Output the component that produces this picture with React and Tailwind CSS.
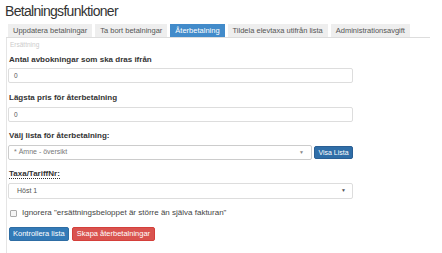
import React from 'react';

const tabs = [
  'Uppdatera betalningar',
  'Ta bort betalningar',
  'Återbetalning',
  'Tildela elevtaxa utifrån lista',
  'Administrationsavgift',
];

const App = () => {
  return (
    <div className="w-[442px] h-[253px] bg-white overflow-hidden text-[#333]" style={{ fontFamily: '"Liberation Sans", Arial, sans-serif' }}>
      {/* Title */}
      <h1 className="pl-[5px] pt-[2px] text-[14px] leading-[19px] tracking-[-0.7px] text-[#333]">Betalningsfunktioner</h1>

      {/* Tabs */}
      <div className="mt-[3px] ml-[6px] w-[424px] flex items-end gap-[3px] pl-[2px] border-b border-[#ddd] h-[14px]">
        {tabs.map((t) => (
          <div
            key={t}
            className={`h-[13px] px-[5px] text-[7.5px] leading-[13px] whitespace-nowrap ${
              t === 'Återbetalning' ? 'bg-[#428bca] text-white' : 'bg-[#eee] text-[#555]'
            }`}
          >
            {t}
          </div>
        ))}
      </div>

      {/* Panel */}
      <div className="ml-[6px] border-l border-[#e5e5e5] pl-[1px] pt-[3px] h-[220px]">
        <div className="pl-[2px] text-[6.5px] leading-[8px] text-[#ccc]">Ersättning</div>

        <div className="mt-[6px] pl-[1px] text-[8px] leading-[10px] font-bold">Antal avbokningar som ska dras ifrån</div>
        <div className="mt-[3px] w-[345px] h-[15px] border border-[#ddd] rounded-[2px] text-[6.5px] leading-[13px] pl-[5px] text-[#555]">0</div>

        <div className="mt-[10px] pl-[1px] text-[8px] leading-[10px] font-bold">Lägsta pris för återbetalning</div>
        <div className="mt-[4px] w-[345px] h-[15px] border border-[#ddd] rounded-[2px] text-[6.5px] leading-[13px] pl-[5px] text-[#555]">0</div>

        <div className="mt-[9px] pl-[1px] text-[8px] leading-[10px] font-bold">Välj lista för återbetalning:</div>
        <div className="mt-[4px] flex items-center w-[345px] gap-[2px]">
          <div className="flex-1 h-[15px] border border-[#ccc] rounded-[2px] flex items-center justify-between pl-[5px] pr-[7px] text-[7px] text-[#777]">
            <span>* Ämne - översikt</span>
            <span className="text-[5px] text-[#888]">▼</span>
          </div>
          <div className="h-[13px] w-[39px] bg-[#2f6ea8] border border-[#2a5f94] rounded-[2px] text-white text-[7px] leading-[11px] text-center">Visa Lista</div>
        </div>

        <div className="mt-[9px] pl-[1px] text-[8px] leading-[10px] font-bold">
          <span className="border-b border-dotted border-[#333]">Taxa/TariffNr:</span>
        </div>
        <div className="mt-[4px] w-[345px] h-[16px] border border-[#ddd] rounded-[2px] flex items-center justify-between pl-[8px] pr-[6px] text-[7px] text-[#555]">
          <span>Höst 1</span>
          <span className="text-[5px] text-[#555]">▼</span>
        </div>

        <div className="mt-[9px] flex items-center pl-[2px] gap-[5px] h-[10px]">
          <div className="w-[7px] h-[7px] border border-[#aaa] rounded-[1px] bg-[#f5f5f5]" />
          <span className="text-[8px] leading-[10px] text-[#444]">Ignorera "ersättningsbeloppet är större än själva fakturan"</span>
        </div>

        <div className="mt-[9px] flex gap-[3px] pl-[1px]">
          <div className="h-[14px] px-[3px] bg-[#337ab7] border border-[#2e6da4] rounded-[2px] text-white text-[7.5px] leading-[12px]">Kontrollera lista</div>
          <div className="h-[14px] px-[4px] bg-[#d9534f] border border-[#d43f3a] rounded-[2px] text-white text-[7.5px] leading-[12px]">Skapa återbetalningar</div>
        </div>
      </div>
    </div>
  );
};

export default App;
